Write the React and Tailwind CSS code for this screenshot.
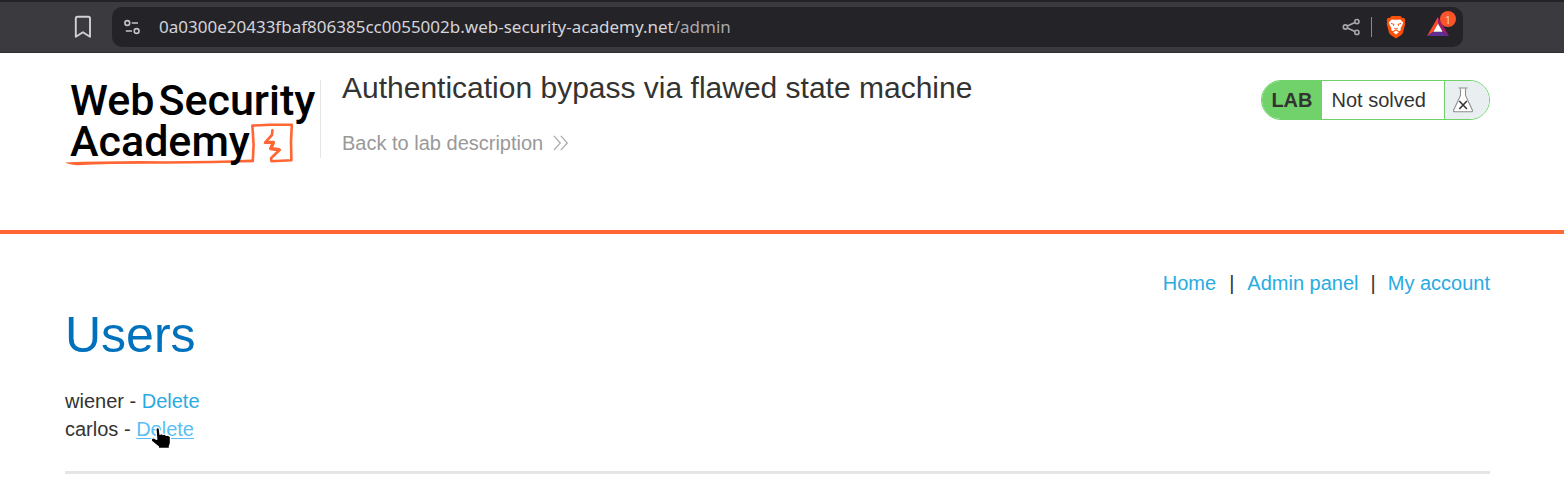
import React from "react";

function BookmarkIcon() {
  return (
    <svg width="18" height="24" viewBox="0 0 18 24" fill="none" stroke="#d2d1d6" strokeWidth="1.9" strokeLinejoin="round" aria-hidden="true">
      <path d="M1.8 3.4Q1.8 1.8 3.4 1.8H14.4Q16 1.8 16 3.4V21.8L8.9 17.3L1.8 21.8Z" />
    </svg>
  );
}

function TuneIcon() {
  return (
    <svg width="18" height="18" viewBox="0 0 18 18" fill="none" stroke="#c4c3c8" strokeWidth="1.6" aria-hidden="true">
      <circle cx="4.3" cy="5" r="2.4" />
      <path d="M8.8 5H15M2.8 13H9" />
      <circle cx="13.6" cy="13" r="2.4" />
    </svg>
  );
}

function ShareIcon() {
  return (
    <svg width="20" height="20" viewBox="0 0 20 20" fill="none" stroke="#a9a8ae" strokeWidth="1.6" aria-hidden="true">
      <circle cx="4.4" cy="10" r="2.1" />
      <circle cx="15.9" cy="4.6" r="2.1" />
      <circle cx="15.9" cy="15.4" r="2.1" />
      <path d="M6.4 9L13.9 5.5M6.4 11L13.9 14.5" />
    </svg>
  );
}

function LionIcon() {
  return (
    <svg width="20" height="24" viewBox="0 0 20 24" aria-hidden="true">
      <path fill="#fb4f0a" d="M5.6 1H14.4L16.3 3L18 2.8L19.4 5L18.8 7L19.3 8.8L17.1 17.3Q16.6 18.9 15.2 19.9L10.8 23Q10 23.5 9.2 23L4.8 19.9Q3.4 18.9 2.9 17.3L.7 8.8L1.2 7L.6 5L2 2.8L3.7 3Z" />
      <path fill="#fff" d="M5.6 4.4L8 4.8H12L14.4 4.4L17.2 7.6L16.2 10.6L14.6 13L14.8 15L13 16.2L11.4 15L10 14.6L8.6 15L7 16.2L5.2 15L5.4 13L3.8 10.6L2.8 7.6Z" />
      <path fill="#fff" d="M10 15.6L12.8 17.3L10 19.6L7.2 17.3Z" />
      <path stroke="#fb4f0a" strokeWidth="1" fill="none" d="M5 8.4L8 9.4L7.4 10.8M15 8.4L12 9.4L12.6 10.8M8.2 13.2L10 14.2L11.8 13.2" />
    </svg>
  );
}

function TriangleIcon() {
  return (
    <svg width="24" height="20" viewBox="0 0 24 20" aria-hidden="true">
      <path fill="#ff4a26" d="M12 0V6.6L7.4 14.8L1 19Z" />
      <path fill="#a21a6a" d="M12 0L23 19L16.6 14.8L12 6.6Z" />
      <path fill="#5f2f96" d="M1 19L7.4 14.8H16.6L23 19Z" />
      <path fill="#fff" d="M12 6.6L16.6 14.8H7.4Z" />
    </svg>
  );
}

function BrowserBar() {
  return (
    <div className="flex h-[53px] items-center border-t-2 border-b border-t-[#232228] border-b-[#2f2e33] bg-[#3b3a3f] pr-[101px] pl-[74px]">
      <button type="button" aria-label="Bookmark this page" className="mr-5">
        <BookmarkIcon />
      </button>
      <div className="flex h-10 min-w-0 grow items-center rounded-[10px] bg-[#242328] pr-[13px] pl-[11px]">
        <button type="button" aria-label="Site settings">
          <TuneIcon />
        </button>
        <div className="ml-[18px] grow truncate font-['Noto_Sans',sans-serif] text-[17px] leading-6 text-[#d4d3d8]">
          0a0300e20433fbaf806385cc0055002b.web-security-academy.net<span className="text-[#a9a8ae]">/admin</span>
        </div>
        <button type="button" aria-label="Share">
          <ShareIcon />
        </button>
        <div className="mx-2.5 h-5 w-px bg-[#8a898f]" />
        <button type="button" aria-label="Shields" className="ml-1">
          <LionIcon />
        </button>
        <button type="button" aria-label="Rewards" className="relative ml-5">
          <TriangleIcon />
          <span className="absolute -top-1.5 -right-1.5 flex size-4 items-center justify-center rounded-full bg-[#fb542b] font-['Noto_Sans',sans-serif] text-[11px] leading-none text-[#f0d0c8]">
            1
          </span>
        </button>
      </div>
    </div>
  );
}

function Logo() {
  return (
    <a href="#" aria-label="Web Security Academy" className="relative block h-[88px] w-[250px] shrink-0 font-['Roboto',sans-serif] text-[43px] leading-[41px] font-medium text-black">
      <svg className="absolute inset-0" width="250" height="88" viewBox="0 0 250 88" fill="none" stroke="#ff6633" aria-hidden="true">
        <path fill="#ff6633" stroke="none" d="M0 82.6Q45 80.6 100 81.2Q150 81 187 79.4L187.5 82.3Q150 83.4 100 83.8Q50 83.5 12 85.2Q4 85 0 82.6Z" />
        <path strokeWidth="2.6" strokeLinejoin="round" strokeLinecap="round" d="M187.8 81L188.6 65L187.4 45.6L206 44.8L226.8 44.8L226 62L226.4 80.3L206.4 81.2L206 78.2L214.8 69.8L205.6 68.6L208.4 62.4L200 62.6L207 55L207.4 50.4" />
        <path strokeWidth="3.4" strokeLinejoin="round" d="M200.6 62.4L208.4 62.4L205.8 68.6L214.4 69.8" />
      </svg>
      <span className="relative flex gap-1 pl-[5px] whitespace-nowrap">
        <span>Web</span>
        <span>Security</span>
      </span>
      <span className="relative block pl-[5px]">Academy</span>
    </a>
  );
}

function FlaskIcon() {
  return (
    <svg width="22" height="28" viewBox="0 0 22 28" fill="none" stroke="#8a8f90" strokeWidth="1.1" aria-hidden="true">
      <path fill="#fff" d="M8.5 2.5V9.5L1.6 24.3Q1.3 25.7 2.6 25.7H19.4Q20.7 25.7 20.4 24.3L13.5 9.5V2.5" />
      <path d="M6.5 2H15.5" />
      <path stroke="#333332" strokeWidth="1.5" d="M7.3 15L14.9 23M14.9 15L7.3 23" />
    </svg>
  );
}

function LabStatus() {
  return (
    <div className="flex h-10 shrink-0 overflow-hidden rounded-full border border-[#71d26b] bg-white leading-[38px] text-[#333332]">
      <span className="bg-[#71d26b] px-[9px] font-bold">LAB</span>
      <p className="pr-[18px] pl-2.5">Not solved</p>
      <span className="flex w-[45px] items-center border-l border-[#71d26b] bg-[#e9eef1] pl-[7px]">
        <FlaskIcon />
      </span>
    </div>
  );
}

function LabHeader() {
  return (
    <header className="flex h-[181px] items-start border-b-4 border-[#ff6633] pt-[27px] pr-[74px] pl-[65px]">
      <Logo />
      <div className="ml-[5px] h-[78px] border-l border-[#e5e5e5]" />
      <div className="grow pl-[21px]">
        <h2 className="-mt-2 text-[30px] leading-[32px]">Authentication bypass via flawed state machine</h2>
        <a href="#" className="mt-[25px] inline-flex items-center leading-7 text-[#999999]">
          Back to lab description
          <svg className="ml-2.5" width="16" height="18" viewBox="0 0 16 18" fill="none" stroke="#aaaaaa" strokeWidth="1.2" aria-hidden="true">
            <path d="M.8 1.8L7.3 9L.8 16.2M7.8 1.8L14.3 9L7.8 16.2" />
          </svg>
        </a>
      </div>
      <LabStatus />
    </header>
  );
}

function HandCursor() {
  return (
    <svg className="absolute top-2 left-3.5" width="24" height="24" viewBox="0 0 24 24" aria-hidden="true">
      <path fill="#000" stroke="#fff" strokeWidth="1.2" strokeLinejoin="round" d="M6 3.6Q6 1.6 7.5 1.6Q9.2 1.6 9.4 3.4L10 8.4Q11.6 6.8 13 8.6Q14.8 7.4 16.2 9.4Q18.6 8.6 20.4 11V16.6Q20.2 18.8 19.4 19.8V22.4H8.4V20.6L1.6 15.2Q.6 12.4 3 11.8Q4.4 11.6 6.8 13.4Z" />
    </svg>
  );
}

export default function App() {
  return (
    <div className="min-h-screen bg-white font-['Liberation_Sans',Arial,sans-serif] text-[20px] text-[#333332]">
      <BrowserBar />
      <LabHeader />
      <main className="pt-[35px] pr-[74px] pl-[65px] leading-7">
        <nav className="flex justify-end text-[#29abe2]">
          <a href="#">Home</a>
          <span className="mx-[13px] text-[#333332]">|</span>
          <a href="#">Admin panel</a>
          <span className="mx-3 text-[#333332]">|</span>
          <a href="#">My account</a>
        </nav>
        <h1 className="mt-2.5 text-[50px] leading-[56px] text-[#0071bc]">Users</h1>
        <ul className="mt-6">
          <li>
            wiener - <a href="#" className="text-[#29abe2]">Delete</a>
          </li>
          <li>
            carlos -{" "}
            <a href="#" className="relative text-[#5bbff5] underline decoration-1 underline-offset-2">
              Delete
              <HandCursor />
            </a>
          </li>
        </ul>
        <hr className="mt-7 border-t-3 border-[#e5e5e5]" />
      </main>
    </div>
  );
}
